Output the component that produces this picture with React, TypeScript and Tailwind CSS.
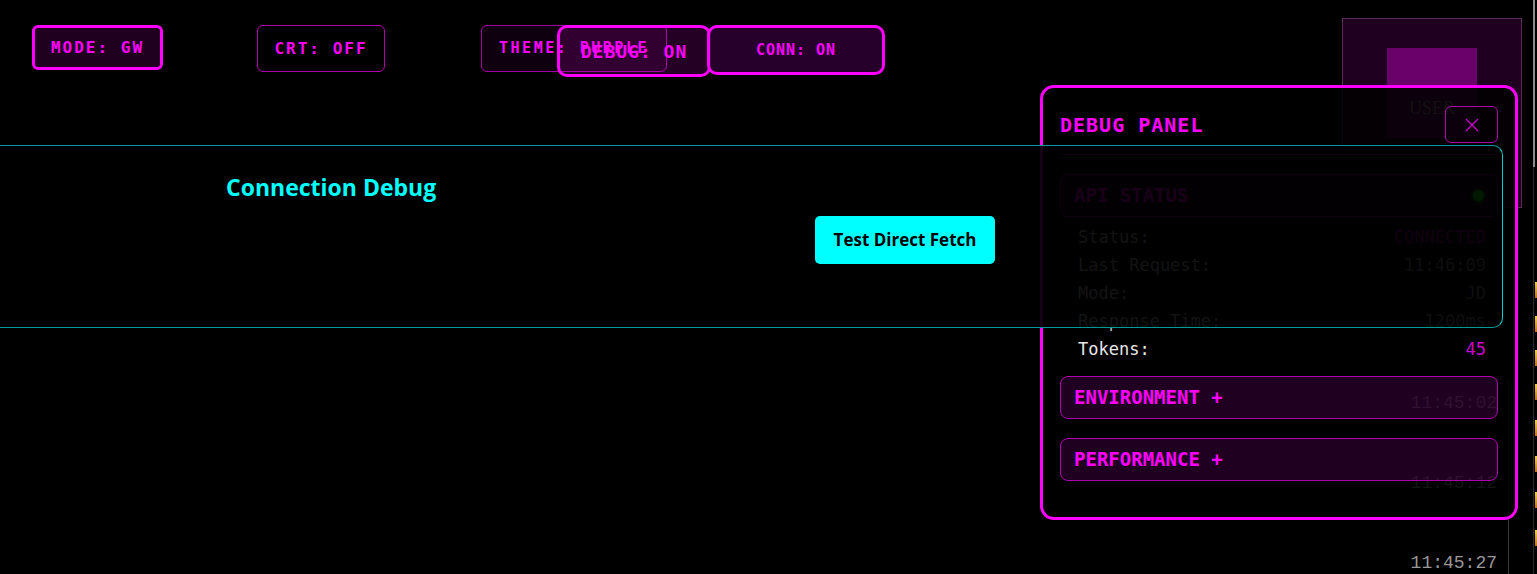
import React from "react";

const mono = "font-['DejaVu_Sans_Mono','Liberation_Mono',monospace]";

const rows = [
  { label: "Status:", value: "CONNECTED", valueClass: "text-[#aa00aa]", labelClass: "text-[#bbbbbb]" },
  { label: "Last Request:", value: "11:46:09", valueClass: "text-[#888888]", labelClass: "text-[#bbbbbb]" },
  { label: "Mode:", value: "JD", valueClass: "text-[#888888]", labelClass: "text-[#bbbbbb]" },
  { label: "Response Time:", value: "1200ms", valueClass: "text-[#888888]", labelClass: "text-[#bbbbbb]" },
  { label: "Tokens:", value: "45", valueClass: "text-[#cc00cc]", labelClass: "text-[#e8e8e8]" },
];

const logTimes = ["11:45:02", "11:45:12", "11:45:27"];

const thumbs = [282, 316, 350, 384, 420, 456, 492, 530];

function Sidebar() {
  return (
    <div className="flex w-[195px] shrink-0">
      <div className="flex w-[180px] flex-col pt-[18px]">
        {/* user card */}
        <div className="flex h-[190px] shrink-0 flex-col items-center border border-[#5a2a5a] bg-[#200020] pt-[29px]">
          <div className="h-[90px] w-[90px] bg-[#6a006a]" />
          <span className="mt-[-42px] font-['Liberation_Serif',serif] text-[18px] leading-[24px] text-[#888888]">
            USER
          </span>
        </div>
        {/* log */}
        <div className="mt-[172px] w-[167px] shrink-0 border-r border-[#3a3a3a]">
          {logTimes.map((t) => (
            <div key={t} className="h-[80px] pr-[11px] pt-[11px] text-right font-['Liberation_Mono',monospace] text-[18px] leading-[24px] text-[#999999]">
              {t}
            </div>
          ))}
        </div>
      </div>
      {/* scroll strip */}
      <div className="relative w-[15px]">
        <div className="absolute left-[11px] top-0 h-[167px] w-[2px] bg-[#8a8a8a]" />
        <div className="absolute left-[11px] top-[167px] h-[407px] w-[1px] bg-[#2a2a2a]" />
        {thumbs.map((y) => (
          <div
            key={y}
            className="absolute left-[13px] h-[16px] w-[2px] bg-gradient-to-b from-[#f0d040] to-[#c07010]"
            style={{ top: y }}
          />
        ))}
      </div>
    </div>
  );
}

function DebugPanel() {
  return (
    <div className={`absolute left-[1040px] top-[85px] h-[435px] w-[478px] rounded-[14px] border-[3px] border-[#ff00ff] bg-black/[0.88] px-[17px] ${mono}`}>
      <div className="mt-[18px] flex h-[37px] items-center justify-between">
        <span className="text-[20px] font-bold tracking-[1px] text-[#ff00ff]">DEBUG PANEL</span>
        <button className="flex h-[37px] w-[53px] items-center justify-center rounded-[6px] border-[1.5px] border-[#b000b0]">
          <svg width="16" height="16" viewBox="0 0 16 16" fill="none" stroke="#cc00cc" strokeWidth="1.3">
            <path d="M2 2 L14 14 M14 2 L2 14" />
          </svg>
        </button>
      </div>
      <div className="mt-[11px] border-b border-[#aa00aa]" />

      {/* api status */}
      <div className="mt-[19px] flex h-[43px] items-center justify-between rounded-[6px] border border-[#aa00aa] bg-[#ff00ff]/[0.125] pl-[13px] pr-[13px]">
        <span className="text-[19px] font-bold text-[#ff00ff]">API STATUS</span>
        <span className="h-[11px] w-[11px] rounded-full bg-[#00ff00] shadow-[0_0_6px_#00ff00]" />
      </div>
      <div className="mt-[7px] pl-[18px] pr-[12px]">
        {rows.map((r) => (
          <div key={r.label} className="flex h-[28px] items-center justify-between text-[17px]">
            <span className={r.labelClass}>{r.label}</span>
            <span className={r.valueClass}>{r.value}</span>
          </div>
        ))}
      </div>

      <div className="mt-[12px] flex h-[43px] items-center rounded-[8px] border-[1.5px] border-[#b000b0] bg-[#ff00ff]/[0.125] pl-[13px]">
        <span className="text-[19px] font-bold text-[#ff00ff]">ENVIRONMENT +</span>
      </div>
      <div className="mt-[19px] flex h-[43px] items-center rounded-[8px] border-[1.5px] border-[#b000b0] bg-[#ff00ff]/[0.125] pl-[13px]">
        <span className="text-[19px] font-bold text-[#ff00ff]">PERFORMANCE +</span>
      </div>
    </div>
  );
}

function ConnectionDebug() {
  return (
    <div className="absolute left-[-20px] top-[145px] flex h-[183px] w-[1523px] flex-col rounded-[10px] border border-[#009a9a] border-r-[#00d0d0] bg-black/[0.9] font-['Open_Sans','Noto_Sans',sans-serif]">
      <h2 className="ml-[245px] mt-[26px] text-[23px] font-bold leading-[30px] text-[#00ffff]">Connection Debug</h2>
      <button className="ml-[834px] mt-[14px] h-[48px] w-[180px] self-start rounded-[5px] bg-[#00ffff] text-[17px] font-bold text-black">
        Test Direct Fetch
      </button>
    </div>
  );
}

export default function App() {
  return (
    <div className="relative flex h-[574px] w-full overflow-hidden bg-black">
      {/* main area */}
      <div className="flex-1">
        <div className={`flex items-start pl-[32px] pt-[25px] ${mono}`}>
          <button className="flex h-[45px] w-[131px] items-center justify-center rounded-[6px] border-[3px] border-[#ff00ff] bg-[#1f001f] text-[16px] font-bold tracking-[2px] text-[#ff00ff]">
            MODE: GW
          </button>
          <button className="ml-[94px] flex h-[47px] w-[128px] items-center justify-center rounded-[6px] border border-[#b000b0] text-[16px] font-bold tracking-[2px] text-[#ff00ff]">
            CRT: OFF
          </button>
          <button className="ml-[96px] flex h-[47px] w-[186px] items-center justify-center rounded-[6px] border border-[#a000a0] bg-[#0f000f] text-[15px] font-bold tracking-[2.5px] text-[#ff00ff]">
            THEME: PURPLE
          </button>
        </div>
      </div>
      <Sidebar />

      {/* floating toggles */}
      <div className={`absolute left-[557px] top-[25px] flex items-start ${mono}`}>
        <button className="flex h-[52px] w-[154px] items-center justify-center rounded-[10px] border-[3px] border-[#ff00ff] bg-[#ff00ff]/[0.14] text-[18px] font-bold tracking-[1px] text-[#ff00ff]">
          DEBUG: ON
        </button>
        <button className="-ml-[4px] flex h-[50px] w-[178px] items-center justify-center rounded-[10px] border-[3px] border-[#ff00ff] bg-[#2a0030]/90 text-[15px] font-bold tracking-[1px] text-[#ff00ff]">
          CONN: ON
        </button>
      </div>

      <DebugPanel />
      <ConnectionDebug />
    </div>
  );
}
